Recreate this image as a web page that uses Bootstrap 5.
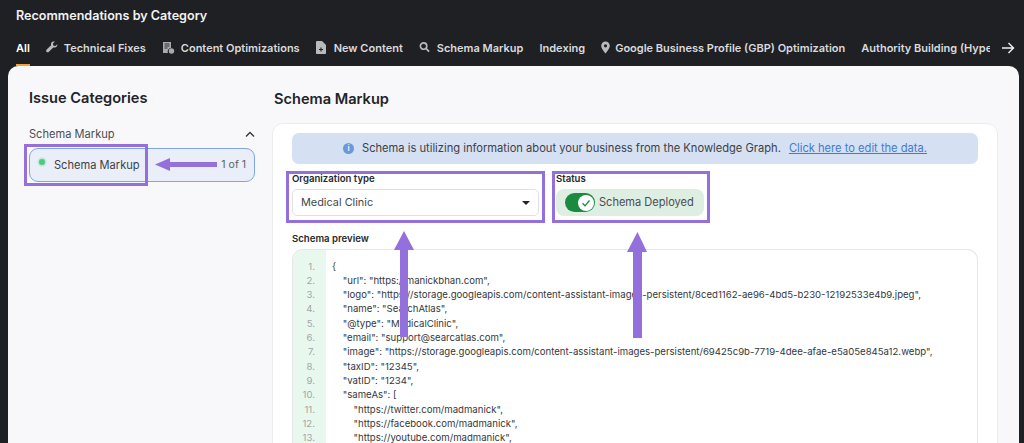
<!DOCTYPE html>
<html lang="en"><head><meta charset="utf-8">
<title>Recommendations by Category</title>
<link href="https://cdn.jsdelivr.net/npm/bootstrap@5.3.0/dist/css/bootstrap.min.css" rel="stylesheet">
<style>
html,body{height:443px;overflow:hidden}
body{background:#1f2023;font-family:Inter,"Liberation Sans",sans-serif;color:#2d2f33;position:relative}
.top-title{color:#f2f2f3;font-size:12.6px;font-weight:600;line-height:16px;padding:8px 0 0 16px;height:41px}
.tabs-row{height:25px;padding-left:16px;color:#d9dadd;font-size:11px;font-weight:600;line-height:14px;white-space:nowrap;overflow:hidden}
.tab-item{margin-right:16px;height:25px;flex:none}
.tab-item svg{flex:none}
.ic-m5{margin-right:5px}.ic-m6{margin-right:6px}.ic-m7{margin-right:7px}.ic-m8{margin-right:8px}
.tab-all{color:#fff;border-bottom:2px solid #f2a33a}
.tabs-clip{width:974px;overflow:hidden}
.tab-arrow{width:14px;height:14px;flex:none;margin-left:11px}
.main-panel{background:#f8f8fb;margin:0 5px 0 8px;height:377px;border-radius:10px 10px 0 0;overflow:hidden}
.side-col{width:264px;flex:none;padding:22px 0 0 21px}
.side-head{font-size:14.6px;font-weight:600;line-height:20px;color:#222428;margin-bottom:18px}
.side-group{font-size:11.1px;line-height:16px;color:#4b4e55;width:226px;margin-bottom:6px}
.side-item{width:226px;height:34px;border:1px solid #7ea6e6;border-radius:9px;background:#e9eef9;font-size:11.1px;padding:0 8px 0 24px;color:#3c3f45;position:relative}
.side-dot{position:absolute;left:9px;top:10px;width:6px;height:6px;border-radius:50%;background:#4cc985;box-shadow:0 0 0 1.5px #c0e8d2}
.side-count{font-size:10.5px;color:#5d6067}
.mark-side{position:absolute;left:24px;top:144px;width:124px;height:42px;border:3px solid #9370db}
.right-col{width:726px;flex:none}
.right-head{font-size:14.6px;font-weight:600;line-height:20px;color:#222428;padding:23px 0 0 2px;height:57px}
.schema-card{background:#fff;border:1px solid #ececef;border-radius:11px;padding:9px 19px 0 19px;height:330px}
.info-strip{height:31px;background:#d5e1f3;border-radius:7px;font-size:11.15px;color:#3e4046;margin-bottom:7px;padding-left:51px}
.info-strip a{color:#3f7ad6;margin-left:8px}
.info-dot{width:11px;height:11px;border-radius:50%;background:#6b98dc;color:#e5edf9;font-size:8px;line-height:11px;text-align:center;margin-right:8px;font-weight:700;flex:none}
.mark-box{border:3px solid #9370db;height:52px}
.mark-org{width:259px;padding:0 3px;margin-left:-6px}
.mark-status{width:158px;margin-left:7px;padding:0 1px}
.field-label{font-size:9.6px;font-weight:600;line-height:9px;color:#26282c;display:block;margin-bottom:6px}
.org-select{width:247px;height:27px;border:1px solid #dfe0e3;border-radius:5px;font-size:10.9px;padding:0 8px;color:#45474d;background:#fff}
.caret-down{width:0;height:0;border-left:4px solid transparent;border-right:4px solid transparent;border-top:4px solid #222}
.status-pill{height:27px;width:148px;background:#dfeee2;border-radius:8px;font-size:11.05px;padding-left:9px;color:#4a4d52}
.toggle-on{width:30px;height:19px;background:#1a8a3f;border-radius:10px;margin-right:4px;position:relative;flex:none}
.toggle-knob{position:absolute;right:1px;top:1.500px;width:16px;height:16px;border-radius:50%;background:#fff}
.preview-label{margin:11px 0 6px}
.code-box{border:1px solid #e6e6e9;border-bottom:0;border-radius:11px 11px 0 0;height:200px;overflow:hidden;font-size:9.6px;line-height:14.33px;color:#35373c}
.code-nums{width:33px;flex:none;background:#e9f8ee;color:#a2a5a8;text-align:right;padding:9.500px 11px 0 0;height:200px}
.code-text{padding:9.500px 0 0 6px;white-space:pre;font-family:Inter,"Liberation Sans",sans-serif}
.arrow-layer{position:absolute;left:0;top:0;width:1024px;height:443px;pointer-events:none}
</style></head>
<body>
<div class="top-title">Recommendations by Category</div>
<div class="tabs-row d-flex align-items-start">
  <div class="tabs-clip d-flex">
  <div class="tab-item tab-all">All</div>
  <div class="tab-item d-flex"><svg class="ic-m6" width="12" height="12" viewBox="0 0 12 12" fill="#b9babd"><path d="M11.3 3.2 9.4 5.1 7.3 4.6 6.9 2.500 8.800.7C7.300.1 5.600.8 5.100 2.300c-.2.7-.2 1.300 0 1.900L.7 8.600c-.7.7-.7 1.700-.1 2.300.6.6 1.600.6 2.300-.1l4.400-4.400c.6.2 1.200.2 1.900 0 1.500-.5 2.400-1.900 2.100-3.200z"/></svg>Technical Fixes</div>
  <div class="tab-item d-flex"><svg class="ic-m6" width="13" height="13" viewBox="0 0 13 13" fill="#a9aaad"><path d="M1 1h8v6a3.400 3.400 0 0 0-3 5H1z"/><circle cx="9.500" cy="10" r="2.700"/><path d="M2.500 3h5M2.500 5h5M2.500 7h3" stroke="#1f2023" stroke-width=".9"/></svg>Content Optimizations</div>
  <div class="tab-item d-flex"><svg class="ic-m8" width="10" height="13" viewBox="0 0 10 13" fill="#b9babd"><path d="M1 0h5l4 4v8.200a.8.800 0 0 1-.8.800H.8a.8.800 0 0 1-.8-.8V1a1 1 0 0 1 1-1z"/><path d="M5 6.500v4M3 8.500h4" stroke="#1f2023" stroke-width="1.100"/></svg>New Content</div>
  <div class="tab-item d-flex"><svg class="ic-m7" width="11" height="12" viewBox="0 0 12 12" fill="none" stroke="#b9babd"><circle cx="5" cy="5" r="3.500" stroke-width="1.800"/><path d="M7.800 7.800 11 11" stroke-width="2"/></svg>Schema Markup</div>
  <div class="tab-item d-flex">Indexing</div>
  <div class="tab-item d-flex"><svg class="ic-m5" width="9" height="13" viewBox="1 0 9 13" fill="#b9babd"><path fill-rule="evenodd" d="M5.500.5a4.300 4.300 0 0 0-4.300 4.300c0 3 4.300 7.700 4.300 7.700s4.300-4.700 4.300-7.700A4.300 4.300 0 0 0 5.500.5zm0 2.700a1.600 1.600 0 1 1 0 3.200 1.600 1.600 0 0 1 0-3.200z"/></svg>Google Business Profile (GBP) Optimization</div>
  <div class="tab-item d-flex">Authority Building (Hypertext)</div>
  </div>
  <svg class="tab-arrow" viewBox="0 0 14 14" fill="none" stroke="#f0f0f2" stroke-width="1.400"><path d="M1 7h11.500M7.500 2l5 5-5 5"/></svg>
</div>
<div class="main-panel d-flex">
  <aside class="side-col">
    <div class="side-head">Issue Categories</div>
    <div class="side-group d-flex justify-content-between align-items-center">Schema Markup
      <svg width="10" height="7" viewBox="0 0 10 7" fill="none" stroke="#33353a" stroke-width="1.300"><path d="M1 5.500 5 1.500l4 4"/></svg>
    </div>
    <div class="side-item d-flex justify-content-between align-items-center"><span class="side-dot"></span><span>Schema Markup</span><span class="side-count">1 of 1</span></div>
  </aside>
  <section class="right-col">
    <div class="right-head">Schema Markup</div>
    <div class="schema-card">
      <div class="info-strip d-flex align-items-center"><span class="info-dot">i</span>Schema is utilizing information about your business from the Knowledge Graph. <a href="#">Click here to edit the data.</a></div>
      <div class="d-flex">
        <div class="mark-box mark-org"><label class="field-label">Organization type</label>
          <div class="org-select d-flex align-items-center justify-content-between">Medical Clinic<span class="caret-down"></span></div></div>
        <div class="mark-box mark-status"><label class="field-label">Status</label>
          <div class="status-pill d-flex align-items-center"><span class="toggle-on"><span class="toggle-knob d-flex align-items-center justify-content-center"><svg width="10" height="10" viewBox="0 0 10 10" fill="none" stroke="#1a8a3f" stroke-width="1.300"><path d="M1.500 5.300 4 7.800 8.500 2.500"/></svg></span></span>Schema Deployed</div></div>
      </div>
      <label class="field-label preview-label">Schema preview</label>
      <div class="code-box d-flex">
        <div class="code-nums">1.<br>2.<br>3.<br>4.<br>5.<br>6.<br>7.<br>8.<br>9.<br>10.<br>11.<br>12.<br>13.<br>14.</div>
        <div class="code-text">{
    "url": "https://manickbhan.com",
    "logo": "https://storage.googleapis.com/content-assistant-images-persistent/8ced1162-ae96-4bd5-b230-12192533e4b9.jpeg",
    "name": "SearchAtlas",
    "@type": "MedicalClinic",
    "email": "support@searcatlas.com",
    "image": "https://storage.googleapis.com/content-assistant-images-persistent/69425c9b-7719-4dee-afae-e5a05e845a12.webp",
    "taxID": "12345",
    "vatID": "1234",
    "sameAs": [
        "https://twitter.com/madmanick",
        "https://facebook.com/madmanick",
        "https://youtube.com/madmanick",
        "https://linkedin.com/madmanick"</div>
      </div>
    </div>
  </section>
</div>
<div class="mark-side"></div>
<svg class="arrow-layer" viewBox="0 0 1024 443" fill="#9370db">
  <path d="M155 164.500 170 158v4h47v5h-47v4z"/>
  <path d="M404 231 414 250h-6v87h-8v-87h-6z"/>
  <path d="M637.500 232 647 252h-5v86h-9v-86h-6z"/>
</svg>
<script src="https://cdn.jsdelivr.net/npm/bootstrap@5.3.0/dist/js/bootstrap.bundle.min.js"></script>
</body></html>
